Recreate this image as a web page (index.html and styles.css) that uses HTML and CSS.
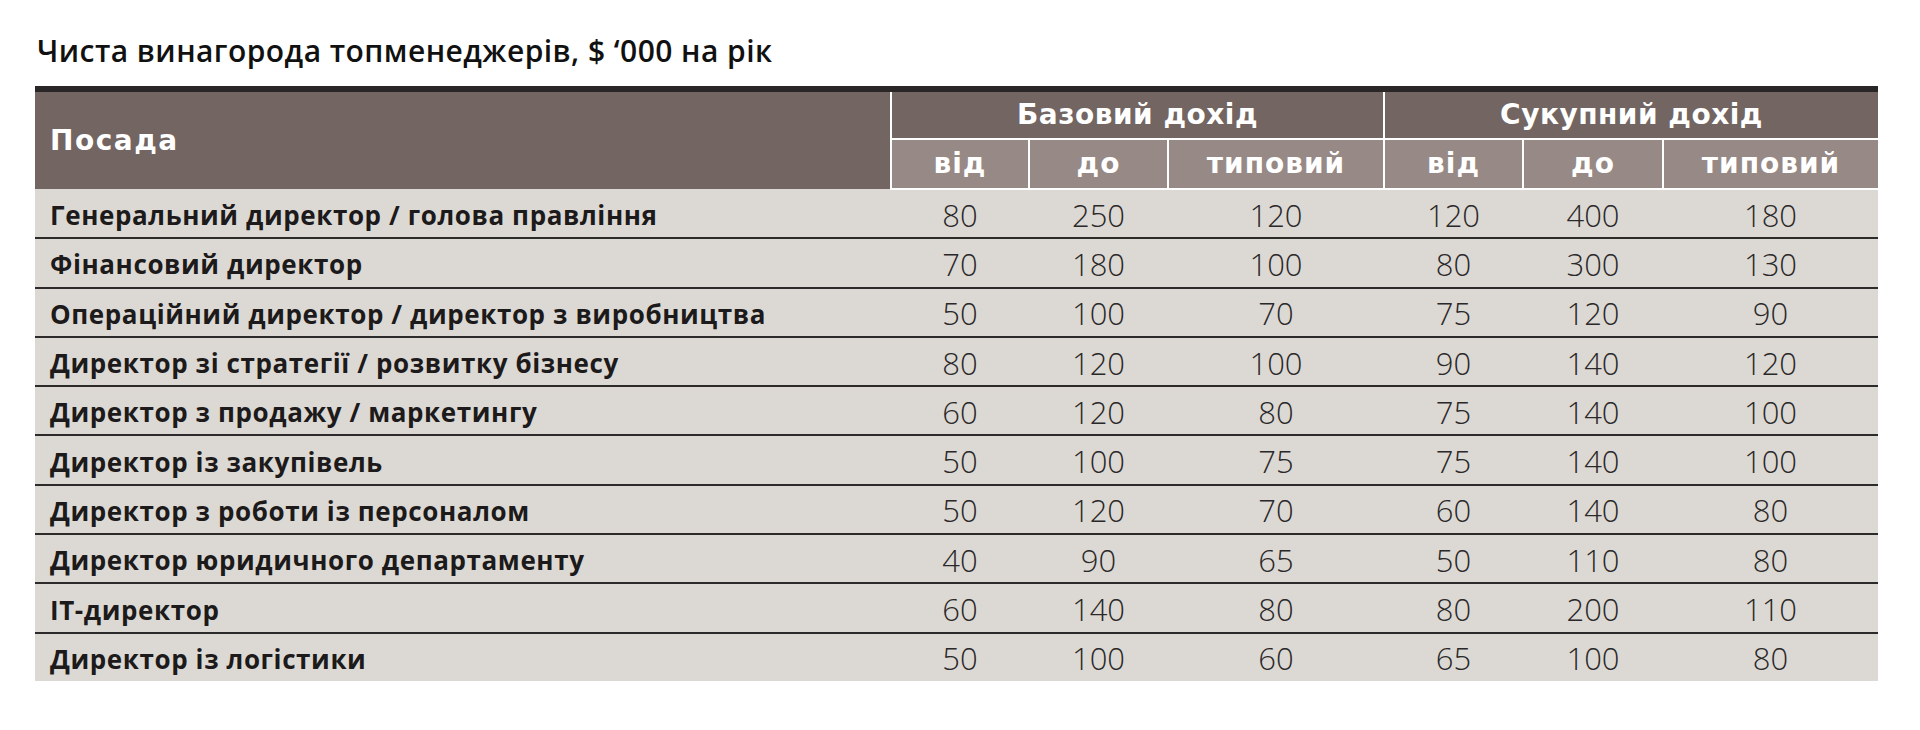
FILE: index.html
```html
<!DOCTYPE html>
<html lang="uk">
<head>
<meta charset="utf-8">
<title>Чиста винагорода топменеджерів</title>
<link rel="stylesheet" href="styles.css">
</head>
<body>
<div class="page">
  <h1 class="title">Чиста винагорода топменеджерів, $ ‘000 на рік</h1>
  <table class="pay">
    <colgroup>
      <col class="c-pos">
      <col class="c-a"><col class="c-b"><col class="c-c">
      <col class="c-d"><col class="c-e"><col class="c-f">
    </colgroup>
    <thead>
      <tr class="grp">
        <th class="pos" rowspan="2">Посада</th>
        <th class="group" colspan="3">Базовий дохід</th>
        <th class="group" colspan="3">Сукупний дохід</th>
      </tr>
      <tr class="sub">
        <th>від</th><th>до</th><th>типовий</th>
        <th>від</th><th>до</th><th>типовий</th>
      </tr>
    </thead>
    <tbody>
      <tr><td class="lbl">Генеральний директор / голова правління</td><td>80</td><td>250</td><td>120</td><td>120</td><td>400</td><td>180</td></tr>
      <tr><td class="lbl">Фінансовий директор</td><td>70</td><td>180</td><td>100</td><td>80</td><td>300</td><td>130</td></tr>
      <tr><td class="lbl">Операційний директор / директор з виробництва</td><td>50</td><td>100</td><td>70</td><td>75</td><td>120</td><td>90</td></tr>
      <tr><td class="lbl">Директор зі стратегії / розвитку бізнесу</td><td>80</td><td>120</td><td>100</td><td>90</td><td>140</td><td>120</td></tr>
      <tr><td class="lbl">Директор з продажу / маркетингу</td><td>60</td><td>120</td><td>80</td><td>75</td><td>140</td><td>100</td></tr>
      <tr><td class="lbl">Директор із закупівель</td><td>50</td><td>100</td><td>75</td><td>75</td><td>140</td><td>100</td></tr>
      <tr><td class="lbl">Директор з роботи із персоналом</td><td>50</td><td>120</td><td>70</td><td>60</td><td>140</td><td>80</td></tr>
      <tr><td class="lbl">Директор юридичного департаменту</td><td>40</td><td>90</td><td>65</td><td>50</td><td>110</td><td>80</td></tr>
      <tr><td class="lbl">IT-директор</td><td>60</td><td>140</td><td>80</td><td>80</td><td>200</td><td>110</td></tr>
      <tr><td class="lbl">Директор із логістики</td><td>50</td><td>100</td><td>60</td><td>65</td><td>100</td><td>80</td></tr>
    </tbody>
  </table>
</div>
</body>
</html>
```
FILE: styles.css
```css
html, body {
  margin: 0;
  padding: 0;
  background: #ffffff;
}

.page {
  padding: 33px 0 0 35px;
}

.title {
  margin: 0 0 17px 0;
  font-family: "Open Sans", "Liberation Sans", sans-serif;
  font-weight: 600;
  font-size: 30px;
  line-height: 36px;
  letter-spacing: 0.45px;
  color: #111111;
  padding-left: 2px;
}

.pay {
  width: 1843px;
  table-layout: fixed;
  border-collapse: collapse;
  border-top: 6px solid #2a2627;
}

.c-pos { width: 856px; }
.c-a { width: 138px; }
.c-b { width: 139px; }
.c-c { width: 216px; }
.c-d { width: 139px; }
.c-e { width: 140px; }
.c-f { width: 215px; }

.pay th {
  padding: 0;
  color: #ffffff;
  font-family: "DejaVu Sans", "Liberation Sans", sans-serif;
  font-weight: 700;
  font-size: 28px;
  line-height: 1;
  letter-spacing: 0.5px;
  text-align: center;
  vertical-align: middle;
}

.pay th.pos {
  background: #726562;
  text-align: left;
  padding-left: 15px;
  border-right: 2px solid #ffffff;
  letter-spacing: 1.5px;
}

.grp th.group {
  background: #726562;
  height: 46px;
  border-bottom: 2px solid #ffffff;
}

.grp th.group + th.group {
  border-left: 2px solid #ffffff;
}

.sub th {
  background: #978985;
  height: 48px;
  letter-spacing: 1px;
  border-left: 2px solid #ffffff;
  border-bottom: 2px solid #ffffff;
}

.pay td {
  height: 44.3px;
  padding: 3px 0 0 0;
  background: #dcd9d4;
  border-bottom: 2px solid #2c2a2a;
  text-align: center;
  vertical-align: middle;
  font-family: "Open Sans", "Liberation Sans", sans-serif;
  font-weight: 300;
  font-size: 31px;
  color: #2a2828;
  line-height: 1;
}

.pay tbody tr:last-child td {
  border-bottom: none;
}

.pay td.lbl {
  text-align: left;
  padding-left: 15px;
  font-weight: 700;
  font-size: 26px;
  letter-spacing: 0.6px;
  color: #1c1a1a;
}
```
